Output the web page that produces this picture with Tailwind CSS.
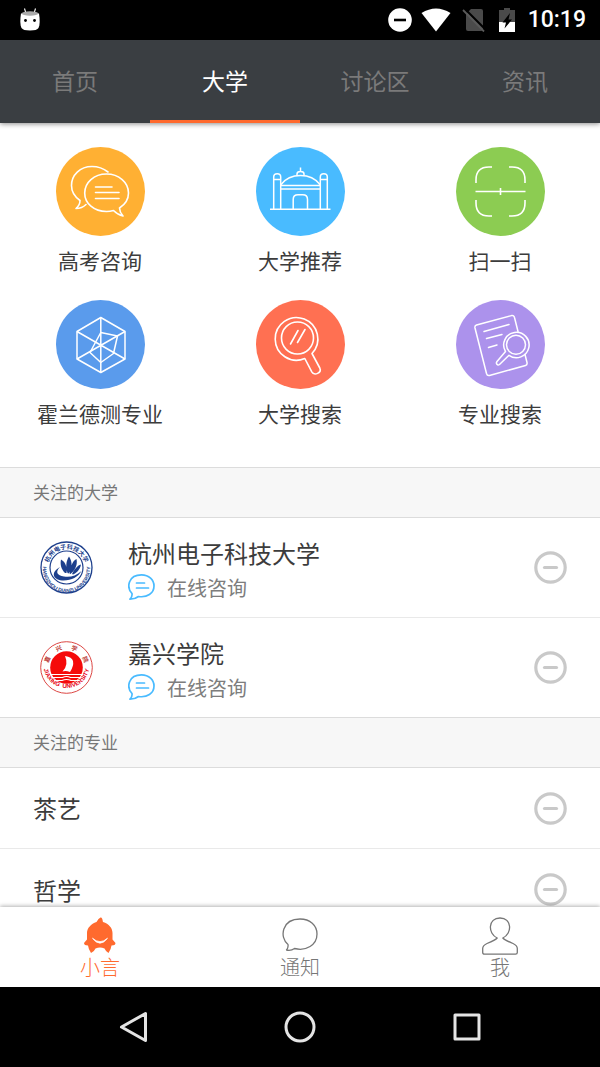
<!DOCTYPE html>
<html lang="zh-Hans">
<head>
    <meta charset="UTF-8">
    <meta name="viewport" content="width=device-width, initial-scale=1.0">
    <title>大学</title>
    <script src="https://cdn.jsdelivr.net/npm/@tailwindcss/browser@4"></script>
</head>
<body class="flex h-screen flex-col overflow-hidden bg-white font-['Noto_Sans_CJK_SC',sans-serif] text-[#3c3c3c]">

    <!-- 状态栏 -->
    <div class="flex h-10 shrink-0 items-center justify-between bg-black pr-[14px] pl-5 text-white">
        <svg class="h-6 w-5" viewBox="0 0 20 24" fill="none">
            <path d="M4.500 0.500l1.500 5M15.500 0.500l-1.500 5" stroke="#fff" stroke-width="1.100"/>
            <path d="M1 5.500C0 12 0 17 1.500 20Q3 22.500 10 22.500T18.500 20C20 17 20 12 19 5.500z" fill="#fff"/>
            <ellipse cx="10" cy="5.500" rx="8.500" ry="2.200" fill="#aaa"/>
            <circle cx="5.500" cy="12.500" r="1.400" fill="#000"/>
            <circle cx="14.500" cy="12.500" r="1.400" fill="#000"/>
        </svg>
        <div class="flex items-center">
            <svg class="mr-2 size-6" viewBox="0 0 24 24">
                <circle cx="12" cy="12" r="11.800" fill="#fff"/>
                <path d="M6 12h12" stroke="#000" stroke-width="2.600"/>
            </svg>
            <svg class="mr-[10px] h-6 w-8" viewBox="0 0 32 24">
                <path d="M1.500 5Q16-4 30.500 5L16 23.500z" fill="#fff"/>
            </svg>
            <svg class="mr-[13px] h-6 w-6" viewBox="0 0 24 24">
                <path d="M9 1h10q2 0 2 2v18q0 2-2 2H6q-2 0-2-2V6z" fill="#4a4a4a"/>
                <path d="M2.500 0.500L24 22" stroke="#000" stroke-width="2"/>
                <path d="M1 2L22 23.500" stroke="#5a5a5a" stroke-width="1.800"/>
            </svg>
            <svg class="mr-[13px] h-6 w-4" viewBox="0 0 16 24">
                <path d="M5 0h6v2h5v12H0V2h5z" fill="#4a4a4a"/>
                <path d="M0 14h16v10H0z" fill="#fff"/>
                <path d="M11 5L3.500 14.500h3.500L5.500 20.500L13 11.500H9.500z" fill="#000"/>
            </svg>
            <span class="font-[Roboto,sans-serif] text-[23px] leading-10 font-medium">10:19</span>
        </div>
    </div>

    <!-- 顶部标签 -->
    <nav class="relative z-10 grid h-[83px] shrink-0 grid-cols-4 bg-[#3a3e42] text-center text-[23px] leading-[80px] text-[#7a7a7a] shadow-[0_1px_5px_rgba(0,0,0,0.45)]">
        <a href="#">首页</a>
        <a href="#" class="border-b-3 border-[#ff6a2e] text-white">大学</a>
        <a href="#">讨论区</a>
        <a href="#">资讯</a>
    </nav>

    <main class="min-h-0 flex-1 overflow-y-auto [scrollbar-width:none]">

        <!-- 功能入口 -->
        <div class="grid grid-cols-3 gap-y-4 pt-6 pb-[30px] text-[21px] leading-8">
            <a href="#" class="flex h-[137px] flex-col items-center gap-2">
                <svg class="size-[89px] shrink-0" viewBox="0 0 89 89" fill="none" stroke="#fff" stroke-width="1.600" stroke-linejoin="round" stroke-linecap="round">
                    <circle cx="44.500" cy="44.500" r="44.500" fill="#ffb033" stroke="none"/>
                    <path d="M52 25Q45 19.500 36 19.500C24 19.500 15.500 28 15.500 38.500Q15.500 47.500 24 53.500Q24 58 20 61.500Q26 61.500 30 57.500"/>
                    <path d="M63.500 61C69 57.500 72.500 52 72.500 46C72.500 35.500 63 27 50.500 27S28.700 35.500 28.700 46S38 64.500 50.500 64.500Q54 64.500 57.500 63.500Q62 68 67 69Q63.500 65 63.500 61z"/>
                    <path d="M39.500 40H56M39.500 45.500H63M39.500 51.500H63"/>
                </svg>
                <span>高考咨询</span>
            </a>
            <a href="#" class="flex h-[137px] flex-col items-center gap-2">
                <svg class="size-[89px] shrink-0" viewBox="0 0 89 89" fill="none" stroke="#fff" stroke-width="1.500">
                    <circle cx="44.500" cy="44.500" r="44.500" fill="#49bbff" stroke="none"/>
                    <path d="M14 62.200H74.500"/>
                    <path d="M17.700 62V30Q17.700 26.800 21.200 26.800T24.700 30V62M17.700 32.500H24.700M64.300 62V30Q64.300 26.800 67.800 26.800T71.300 30V62M64.300 32.500H71.300"/>
                    <path d="M25 38.500H64M25 42H64M25 37.500Q32 28.500 44.500 28.500T64 37.500"/>
                    <path d="M41 28.500V27Q41 24.500 44.500 24.500T48 27V28.500M44.500 20.500V24.500"/>
                    <path d="M37.200 62V52.500Q37.200 47.800 42 47.800H46.700Q51.500 47.800 51.500 52.500V62"/>
                </svg>
                <span>大学推荐</span>
            </a>
            <a href="#" class="flex h-[137px] flex-col items-center gap-2">
                <svg class="size-[89px] shrink-0" viewBox="0 0 89 89" fill="none" stroke="#fff" stroke-width="1.600">
                    <circle cx="44.500" cy="44.500" r="44.500" fill="#8ccc52" stroke="none"/>
                    <path d="M20 36V33Q20 20 33 20H36M53 20H56Q69 20 69 33V36M69 53V56Q69 69 56 69H53M36 69H33Q20 69 20 56V53"/>
                    <path d="M19.500 44.500H69.500M44.500 41V48"/>
                </svg>
                <span>扫一扫</span>
            </a>
            <a href="#" class="flex h-[137px] flex-col items-center gap-2">
                <svg class="size-[89px] shrink-0" viewBox="0 0 89 89" fill="none" stroke="#fff" stroke-width="1.500" stroke-linejoin="round">
                    <circle cx="44.500" cy="44.500" r="44.500" fill="#5a9bec" stroke="none"/>
                    <path d="M44.800 17.500L69 31.500V59L44.800 72.500L21 59V31.500z"/>
                    <path d="M44.800 17.500V72.500M21 31.500L69 59M69 31.500L21 59"/>
                    <path d="M44.800 32.500L61.500 36L57.500 53.500L44.800 62.500L34 52.500z"/>
                </svg>
                <span>霍兰德测专业</span>
            </a>
            <a href="#" class="flex h-[137px] flex-col items-center gap-2">
                <svg class="size-[89px] shrink-0" viewBox="0 0 89 89" fill="none" stroke="#fff" stroke-width="1.600" stroke-linecap="round">
                    <circle cx="44.500" cy="44.500" r="44.500" fill="#ff7052" stroke="none"/>
                    <path d="M48.800 58.500A21.300 21.300 0 1 1 56 53.500L63.800 68C66 72.500 58.500 76.500 55.800 71.800z" stroke-linejoin="round"/>
                    <circle cx="41.500" cy="38" r="16"/>
                    <path d="M42 30.500L34.500 44M49 29.500L41.500 42.500"/>
                </svg>
                <span>大学搜索</span>
            </a>
            <a href="#" class="flex h-[137px] flex-col items-center gap-2">
                <svg class="size-[89px] shrink-0" viewBox="0 0 89 89" fill="none" stroke="#fff" stroke-width="1.500" stroke-linecap="round" stroke-linejoin="round">
                    <circle cx="44.500" cy="44.500" r="44.500" fill="#ac92ec" stroke="none"/>
                    <path d="M62 31.500L58.500 17.500Q58 15 55.500 15.600L20.500 25Q18.500 25.600 19 28L30.500 73.500Q31.200 76 33.500 75.500L69.500 65.500Q71.500 65 71 62.500L69 54.500"/>
                    <path d="M28 31.500L53 24.500M30.500 38.500L46 34.500M32.500 47.500L41 45"/>
                    <path d="M49.500 51.500A12.700 12.700 0 1 1 53 55.300L43.500 64.500C41.500 66 39.500 63.500 41 61.500z"/>
                    <circle cx="60" cy="44.800" r="9.500"/>
                </svg>
                <span>专业搜索</span>
            </a>
        </div>

        <h2 class="h-[51px] border-y border-[#dcdcdc] bg-[#f7f7f7] pl-[33px] text-[17px] leading-[47px] text-[#777]">关注的大学</h2>
        <ul class="divide-y divide-[#e9e9e9]">
            <li class="flex h-[100px] items-center pr-[33px] pl-10">
                <svg class="mr-[35px] size-[53px] shrink-0" viewBox="0 0 53 53" fill="none">
                    <defs>
                        <path id="hduTop" d="M8 26.500A18.500 18.500 0 0 1 45 26.500"/>
                        <path id="hduBottom" d="M3.200 24A23.600 23.600 0 1 0 49.800 24"/>
                    </defs>
                    <circle cx="26.500" cy="26.500" r="25.500" stroke="#1d3f8c" stroke-width="1.300"/>
                    <circle cx="26.500" cy="26.500" r="16.500" stroke="#1d3f8c" stroke-width="1.200"/>
                    <text class="font-['Noto_Sans_CJK_SC',sans-serif] text-[6px] font-bold" fill="#1d3f8c"><textPath href="#hduTop" startOffset="50%" text-anchor="middle">杭州电子科技大学</textPath></text>
                    <text class="font-['Liberation_Sans',sans-serif] text-[5px] font-bold" fill="#1d3f8c"><textPath href="#hduBottom" startOffset="50%" text-anchor="middle">HANGZHOU DIANZI UNIVERSITY</textPath></text>
                    <path d="M20 26C11 31 12 38 22 39.500C31 40 38 36 41.500 30C36 35 30 36.500 24 35.500C17 34.500 15 31 20 26z" fill="#1d3f8c"/>
                    <path d="M25 32C21 28 20 23 21 18.500C26 21 27.500 28 26.500 32zM27.500 32C25.500 26 26 20 29 15.500C33 21 32 29 28.500 32.500zM29.500 32.500C30.500 27 32 20 36.500 18C38 25 34 30 30.500 33zM32 33C34 29 37 24.500 41 23.500C40 29 36 32.500 33 33.500z" fill="#1d3f8c"/>
                </svg>
                <div class="flex-1 pt-[6px]">
                    <h3 class="text-[24px] leading-[34px]">杭州电子科技大学</h3>
                    <a href="#" class="flex items-center gap-3 text-[20px] leading-9 text-[#7d7d7d]">
                        <svg class="h-7 w-[27px]" viewBox="0 0 27 28" fill="none" stroke="#49bbff" stroke-width="1.700" stroke-linecap="round" stroke-linejoin="round">
                            <path d="M4 19.500C-2 13 0.500 0.900 13.500 0.900C21 0.900 26 6 26 12C26 19.500 19 23.800 10.500 22.500Q7 25.200 2 25.200Q4.500 22.500 4 19.500z"/>
                            <path d="M8.500 9H16.500M8.500 14H20.500"/>
                        </svg>
                        在线咨询
                    </a>
                </div>
                <button type="button" aria-label="取消关注杭州电子科技大学">
                    <svg class="size-[33px]" viewBox="0 0 33 33" fill="none" stroke="#c9c9c9" stroke-width="3.200" stroke-linecap="round">
                        <circle cx="16.500" cy="16.500" r="14.700"/>
                        <path d="M10.500 16.500H22.500"/>
                    </svg>
                </button>
            </li>
            <li class="flex h-[99px] items-center pr-[33px] pl-10">
                <svg class="mr-[35px] size-[53px] shrink-0" viewBox="0 0 53 53" fill="none">
                    <defs>
                        <path id="jxuTop" d="M8 26.500A18.500 18.500 0 0 1 45 26.500"/>
                        <path id="jxuBottom" d="M3.500 24A23 23 0 1 0 49.500 24"/>
                    </defs>
                    <circle cx="26.500" cy="26.500" r="25.800" stroke="#d8322f" stroke-width="0.900"/>
                    <text class="font-['Noto_Sans_CJK_SC',sans-serif] text-[6px] font-bold" fill="#b8322f"><textPath href="#jxuTop" startOffset="50%" text-anchor="middle">嘉&nbsp;&nbsp;&nbsp;&nbsp;&nbsp;&nbsp;兴&nbsp;&nbsp;&nbsp;&nbsp;&nbsp;&nbsp;学&nbsp;&nbsp;&nbsp;&nbsp;&nbsp;&nbsp;院</textPath></text>
                    <text class="font-['Liberation_Sans',sans-serif] text-[6px] font-bold" fill="#e60012"><textPath href="#jxuBottom" startOffset="50%" text-anchor="middle">JIAXING&nbsp;&nbsp;UNIVERSITY</textPath></text>
                    <circle cx="26.500" cy="26.500" r="16.300" fill="#f50a0a"/>
                    <path d="M25 15Q32 16 33 20Q34 25 30 31Q26 29.500 22.500 30.500Q29 24 25 15z" fill="#fff"/>
                    <path d="M10 33.500H43M11.500 36.500H22.500q4-2 8 0H41.500M14 39.500H22q4.500-2 9 0H39" stroke="#fff" stroke-width="1.200"/>
                </svg>
                <div class="flex-1 pt-[6px]">
                    <h3 class="text-[24px] leading-[34px]">嘉兴学院</h3>
                    <a href="#" class="flex items-center gap-3 text-[20px] leading-9 text-[#7d7d7d]">
                        <svg class="h-7 w-[27px]" viewBox="0 0 27 28" fill="none" stroke="#49bbff" stroke-width="1.700" stroke-linecap="round" stroke-linejoin="round">
                            <path d="M4 19.500C-2 13 0.500 0.900 13.500 0.900C21 0.900 26 6 26 12C26 19.500 19 23.800 10.500 22.500Q7 25.200 2 25.200Q4.500 22.500 4 19.500z"/>
                            <path d="M8.500 9H16.500M8.500 14H20.500"/>
                        </svg>
                        在线咨询
                    </a>
                </div>
                <button type="button" aria-label="取消关注嘉兴学院">
                    <svg class="size-[33px]" viewBox="0 0 33 33" fill="none" stroke="#c9c9c9" stroke-width="3.200" stroke-linecap="round">
                        <circle cx="16.500" cy="16.500" r="14.700"/>
                        <path d="M10.500 16.500H22.500"/>
                    </svg>
                </button>
            </li>
        </ul>

        <h2 class="h-[51px] border-y border-[#dcdcdc] bg-[#f7f7f7] pl-[33px] text-[17px] leading-[47px] text-[#777]">关注的专业</h2>
        <ul class="divide-y divide-[#e9e9e9] text-[24px]">
            <li class="flex h-[81px] items-center justify-between pr-[33px] pl-[33px]">
                <span>茶艺</span>
                <button type="button" aria-label="取消关注茶艺">
                    <svg class="size-[33px]" viewBox="0 0 33 33" fill="none" stroke="#c9c9c9" stroke-width="3.200" stroke-linecap="round">
                        <circle cx="16.500" cy="16.500" r="14.700"/>
                        <path d="M10.500 16.500H22.500"/>
                    </svg>
                </button>
            </li>
            <li class="flex h-[81px] items-center justify-between pr-[33px] pl-[33px]">
                <span>哲学</span>
                <button type="button" aria-label="取消关注哲学">
                    <svg class="size-[33px]" viewBox="0 0 33 33" fill="none" stroke="#c9c9c9" stroke-width="3.200" stroke-linecap="round">
                        <circle cx="16.500" cy="16.500" r="14.700"/>
                        <path d="M10.500 16.500H22.500"/>
                    </svg>
                </button>
            </li>
        </ul>
    </main>

    <!-- 底部导航 -->
    <nav class="relative z-10 grid h-20 shrink-0 grid-cols-3 bg-white pt-[10px] text-[20px] leading-6 font-light text-[#777] shadow-[0_-1px_4px_rgba(0,0,0,0.3)]">
        <a href="#" class="flex flex-col items-center text-[#ff6a2e]">
            <svg class="h-[38px] w-[34px]" viewBox="0 0 34 38">
                <path d="M17.500 0.500C19.500 0.500 19.500 3 20 5C26 7 29.500 11 29.500 16V22.500L32.500 26Q32.500 28.500 28.500 28.500Q28 32.500 25.500 36Q23 35 21.500 31.500Q17 29.500 12.500 31.500Q11 35 8 36Q5.500 32.500 5 28.500Q1 28.500 1 26L4 22.500V16C4 11 8 7 13.500 5Q15.500 1 17.500 0.500z" fill="#ff6a2e"/>
                <path d="M9.500 21.300Q17 28 24.500 21.300Q17 31 9.500 21.300z" fill="#fff" stroke="#fff" stroke-width="0.800"/>
            </svg>
            小言
        </a>
        <a href="#" class="flex flex-col items-center">
            <svg class="h-[38px] w-9" viewBox="0 0 36 38" fill="none" stroke="#777" stroke-width="1.300" stroke-linejoin="round">
                <path d="M6 27.500C-3 20 0 2 18 2C28 2 35 8.500 35 17C35 28 24 34.500 12.500 31.500Q9 34 4.500 33Q6.500 30.500 6 27.500z"/>
            </svg>
            通知
        </a>
        <a href="#" class="flex flex-col items-center">
            <svg class="h-[38px] w-9" viewBox="0 0 36 38" fill="none" stroke="#777" stroke-width="1.300" stroke-linejoin="round">
                <path d="M15.200 21C5.500 16.500 6 1 18 1S30.500 16.500 20.800 21Q22.500 23 31 26.500Q35.300 28.500 35.300 31.500V35.500Q35.300 37.200 33.500 37.200H2.500Q0.700 37.200 0.700 35.500V31.500Q0.700 28.500 5 26.500Q13.500 23 15.200 21z"/>
            </svg>
            我
        </a>
    </nav>

    <!-- 系统按键 -->
    <div class="grid h-20 shrink-0 grid-cols-3 place-items-center bg-black px-[50px]">
        <button type="button" aria-label="返回">
            <svg class="size-8" viewBox="0 0 32 32" fill="none" stroke="#e4e4e4" stroke-width="3" stroke-linejoin="round">
                <path d="M28.500 2.500V29.500L4.500 16z"/>
            </svg>
        </button>
        <button type="button" aria-label="主屏幕">
            <svg class="size-8" viewBox="0 0 32 32" fill="none" stroke="#e4e4e4" stroke-width="3">
                <circle cx="16" cy="16" r="14"/>
            </svg>
        </button>
        <button type="button" aria-label="最近任务">
            <svg class="size-8" viewBox="0 0 32 32" fill="none" stroke="#e4e4e4" stroke-width="3" stroke-linejoin="round">
                <path d="M4 4H28V28H4z"/>
            </svg>
        </button>
    </div>
</body>
</html>
